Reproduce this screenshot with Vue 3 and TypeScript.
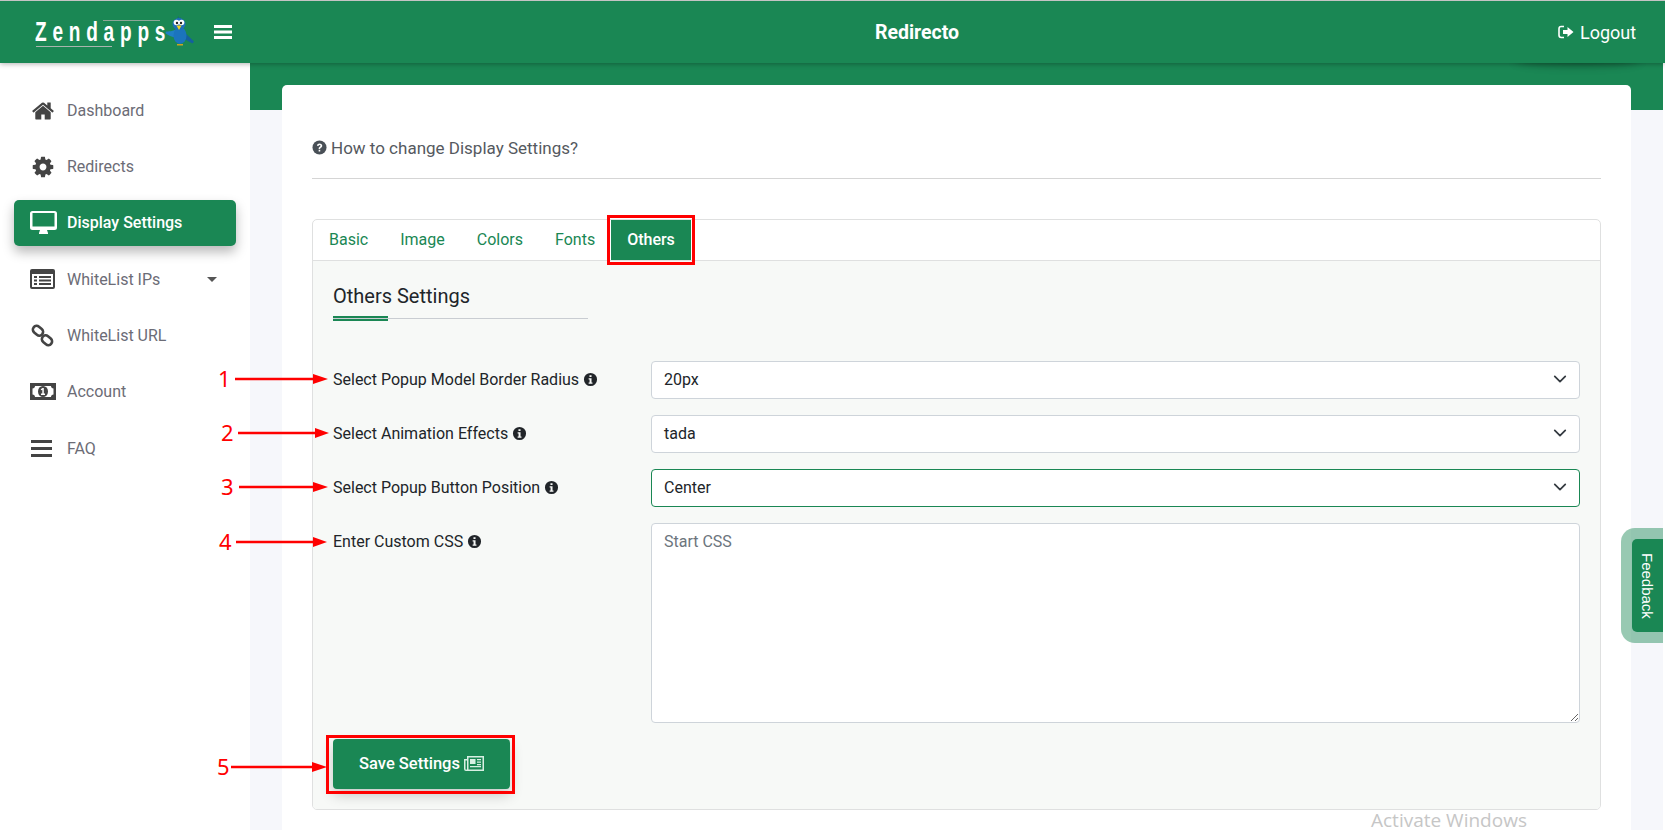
<script setup lang="ts">
interface NavItem { label: string; icon: string; active?: boolean; caret?: boolean }
const nav: NavItem[] = [
  { label: 'Dashboard', icon: 'home' },
  { label: 'Redirects', icon: 'cog' },
  { label: 'Display Settings', icon: 'desktop', active: true },
  { label: 'WhiteList IPs', icon: 'list', caret: true },
  { label: 'WhiteList URL', icon: 'link' },
  { label: 'Account', icon: 'money' },
  { label: 'FAQ', icon: 'bars' },
]
const tabs = ['Basic', 'Image', 'Colors', 'Fonts', 'Others']
const rows = [
  { label: 'Select Popup Model Border Radius', value: '20px', focus: false },
  { label: 'Select Animation Effects', value: 'tada', focus: false },
  { label: 'Select Popup Button Position', value: 'Center', focus: true },
]
const arrows = [
  { n: '1', nx: 218, x: 235, hx: 313, ex: 328, y: 379 },
  { n: '2', nx: 221, x: 238, hx: 315, ex: 329, y: 433 },
  { n: '3', nx: 221, x: 239, hx: 313, ex: 328, y: 487 },
  { n: '4', nx: 219, x: 236, hx: 313, ex: 327, y: 542 },
  { n: '5', nx: 217, x: 231, hx: 312, ex: 327, y: 767 },
]
const infoPath = 'M8 1a7 7 0 1 0 0 14A7 7 0 0 0 8 1zM6.9 3.4h2.2v2H6.9zM6 6.7h3.1v4.6h1v1.3H6v-1.3h1V8H6z'
</script>

<template>
  <div class="page">
    <i class="logout-shade"></i>
    <header class="topbar">
      <div class="brand">
        <div class="logo"><span>Zendapps</span></div>
        <svg class="bird" viewBox="0 0 30 32" width="30" height="32">
          <path d="M13 1l1.500 3.500L16 2l-.5 4-3 1z" fill="#1b4f9c" />
          <path d="M17 15l12 11.500-1.500 2L14 21z" fill="#14609f" />
          <path d="M14 12.500C10 16 5 16.500 1.500 16.500c-1.500.5-1 2 0 2.500 2 1.500 5 2.500 8 3.500L15 19z" fill="#1f7fc4" />
          <ellipse cx="15" cy="20.500" rx="6.500" ry="8.500" fill="#1b74bd" />
          <ellipse cx="14" cy="9" rx="6.500" ry="6" fill="#1f6fb8" />
          <circle cx="11.500" cy="7.500" r="2.800" fill="#fff" />
          <circle cx="16.500" cy="7.500" r="2.800" fill="#fff" />
          <circle cx="12" cy="8" r="1.200" fill="#222" />
          <circle cx="16" cy="8" r="1.200" fill="#222" />
          <path d="M11.500 10.500h5l-2.500 4.500z" fill="#f3d21f" />
          <path d="M12 29h6v1.500h-6z" fill="#c9a520" />
        </svg>
        <svg class="burger" viewBox="0 0 18 14" width="18" height="14">
          <path d="M0 0h18v3H0zM0 5.500h18v3H0zM0 11h18v3H0z" fill="#fff" />
        </svg>
      </div>
      <div class="title">Redirecto</div>
      <div class="logout">
        <svg viewBox="0 0 16 16" width="16" height="16">
          <path d="M6 2.500H3.200C2 2.500 1 3.500 1 4.700v6.600c0 1.200 1 2.200 2.200 2.200H6" fill="none" stroke="#fff" stroke-width="1.600" />
          <path d="M5 6h4.500V3l6 5-6 5v-3H5z" fill="#fff" />
        </svg>
        <span>Logout</span>
      </div>
    </header>

    <div class="body">
      <aside class="sidebar">
        <div v-for="item in nav" :key="item.label" class="nav-item" :class="{ active: item.active }">
          <span class="nav-icon">
            <svg v-if="item.icon === 'home'" viewBox="0 0 1792 1792" width="24" height="24"><path d="M1472 992v480q0 26-19 45t-45 19h-384v-384h-256v384h-384q-26 0-45-19t-19-45v-480q0-1 .5-3t.5-3l575-474 575 474q1 2 1 6zm223-69l-62 74q-8 9-21 11h-3q-13 0-21-7l-692-577-692 577q-12 8-24 7-13-2-21-11l-62-74q-8-10-7-23.5t11-21.5l719-599q32-26 76-26t76 26l244 204v-195q0-14 9-23t23-9h192q14 0 23 9t9 23v408l219 182q10 8 11 21.5t-7 23.5z" /></svg>
            <svg v-else-if="item.icon === 'cog'" viewBox="0 0 1792 1792" width="24" height="24"><path d="M1152 896q0-106-75-181t-181-75-181 75-75 181 75 181 181 75 181-75 75-181zm512-109v222q0 12-8 23t-20 13l-185 28q-19 54-39 91 35 50 107 138 10 12 10 25t-9 23q-27 37-99 108t-94 71q-12 0-26-9l-138-108q-44 23-91 38-16 136-29 186-7 28-36 28h-222q-14 0-24.5-8.5t-11.5-21.5l-28-184q-49-16-90-37l-141 107q-10 9-25 9-14 0-25-11-126-114-165-168-7-10-7-23 0-12 8-23 15-21 51-66.5t54-70.5q-27-50-41-99l-183-27q-13-2-21-12.5t-8-23.5v-222q0-12 8-23t19-13l186-28q14-46 39-92-40-57-107-138-10-12-10-24 0-10 9-23 26-36 98.5-107.5t94.5-71.5q13 0 26 10l138 107q44-23 91-38 16-136 29-186 7-28 36-28h222q14 0 24.5 8.5t11.5 21.5l28 184q49 16 90 37l142-107q9-9 24-9 13 0 25 10 129 119 165 170 7 8 7 22 0 12-8 23-15 21-51 66.5t-54 70.5q26 50 41 98l183 28q13 2 21 12.5t8 23.5z" /></svg>
            <svg v-else-if="item.icon === 'desktop'" class="wide" viewBox="0 0 27 23" width="27" height="23"><path fill-rule="evenodd" d="M2.500 0h22A2.500 2.500 0 0 1 27 2.500v14a2.500 2.500 0 0 1-2.500 2.500H17l1 3v1H9v-1l1-3H2.500A2.500 2.500 0 0 1 0 16.500v-14A2.500 2.500 0 0 1 2.500 0zM2.500 2v13.500h22V2z" /></svg>
            <svg v-else-if="item.icon === 'list'" class="wide" viewBox="0 0 25 20" width="25" height="20"><path fill-rule="evenodd" d="M2 0h21a2 2 0 0 1 2 2v16a2 2 0 0 1-2 2H2a2 2 0 0 1-2-2V2a2 2 0 0 1 2-2zM2 5v13h21V5zM4 7h3v2H4zM9 7h12v2H9zM4 10.500h3v2H4zM9 10.500h12v2H9zM4 14h3v2H4zM9 14h12v2H9z" /></svg>
            <svg v-else-if="item.icon === 'link'" viewBox="0 0 23 23" width="23" height="23"><g fill="none" stroke="#444" stroke-width="2.600"><rect x="1.500" y="3" width="11" height="7.500" rx="3.700" transform="rotate(40 7 6.700)" /><rect x="10.500" y="12.500" width="11" height="7.500" rx="3.700" transform="rotate(40 16 16.200)" /></g></svg>
            <svg v-else-if="item.icon === 'money'" class="wide" viewBox="0 0 26 17" width="26" height="17"><path fill-rule="evenodd" d="M0 0h26v17H0zM5 3c0 1.500-1 2.500-2.500 2.500v6C4 11.500 5 12.500 5 14h16c0-1.500 1-2.500 2.500-2.500v-6C22 5.500 21 4.500 21 3z" /><ellipse cx="13" cy="8.500" rx="5" ry="5.500" /><path d="M12.500 5h1.300v5.500H15V12h-4v-1.500h1.300V6.700l-1 .6-.6-1z" fill="#fff" /></svg>
            <svg v-else viewBox="0 0 21 17" width="21" height="17"><path d="M0 0h21v3H0zM0 7h21v3H0zM0 14h21v3H0z" /></svg>
          </span>
          <span class="nav-label">{{ item.label }}</span>
          <i v-if="item.caret" class="caret"></i>
        </div>
      </aside>

      <main class="main">
        <section class="card">
          <div class="help">
            <svg viewBox="0 0 16 16" width="15" height="15"><circle cx="8" cy="8" r="7.500" fill="#495057" /><path d="M5.300 6.200C5.500 4.600 6.600 3.700 8.100 3.700c1.600 0 2.800 1 2.800 2.400 0 1.100-.6 1.700-1.400 2.200-.6.400-.8.600-.8 1.200H7.100c0-1.100.3-1.700 1.100-2.200.6-.4.900-.6.900-1.100 0-.5-.4-.8-1-.8-.7 0-1.100.4-1.200 1zM7.100 10.300h1.700v1.900H7.100z" fill="#fff" /></svg>
            <span>How to change Display Settings?</span>
          </div>

          <div class="tabbox">
            <nav class="tabs">
              <span v-for="t in tabs" :key="t" class="tab" :class="{ on: t === 'Others' }">{{ t }}</span>
            </nav>
            <div class="pane">
              <h4 class="pane-title">Others Settings</h4>
              <div class="rule"><i></i></div>

              <div v-for="r in rows" :key="r.label" class="row">
                <label class="lab">
                  {{ r.label }}
                  <svg viewBox="0 0 16 16" width="15" height="15"><path fill-rule="evenodd" :d="infoPath" fill="#212529" /></svg>
                </label>
                <div class="select" :class="{ focus: r.focus }">
                  <span>{{ r.value }}</span>
                  <svg viewBox="0 0 16 16" width="14" height="14"><path d="M2 5l6 6 6-6" fill="none" stroke="#343a40" stroke-width="2" stroke-linecap="round" stroke-linejoin="round" /></svg>
                </div>
              </div>

              <div class="row">
                <label class="lab">
                  Enter Custom CSS
                  <svg viewBox="0 0 16 16" width="15" height="15"><path fill-rule="evenodd" :d="infoPath" fill="#212529" /></svg>
                </label>
                <textarea class="area" placeholder="Start CSS"></textarea>
              </div>

              <button class="save" type="button">
                Save Settings
                <svg viewBox="0 0 20 15" width="20" height="15"><path fill-rule="evenodd" d="M3 0h17v15H2a2 2 0 0 1-2-2V3h3zM1.500 4.500V13a.5.5 0 0 0 1.500 0V4.500zM4.500 1.500v12h14v-12z" fill="#d8efe3" /><path d="M6 3h5.500v5H6zM13 3h4v1.300h-4zM13 5.500h4v1.300h-4zM13 8h4v1.200h-4zM6 10h11v1.200H6z" fill="#d8efe3" /></svg>
              </button>
            </div>
          </div>
        </section>
      </main>
    </div>

    <svg class="marks" width="1665" height="830" viewBox="0 0 1665 830">
      <rect x="608.500" y="216.500" width="85" height="47" fill="none" stroke="#f00" stroke-width="3" />
      <rect x="327.500" y="736.500" width="186" height="56" fill="none" stroke="#f00" stroke-width="3" />
      <g v-for="a in arrows" :key="a.n">
        <path :d="`M${a.x} ${a.y}H${a.hx}`" stroke="#f00" stroke-width="2.500" />
        <path :d="`M${a.hx} ${a.y - 5}L${a.ex} ${a.y}L${a.hx} ${a.y + 5}z`" fill="#f00" />
        <text :x="a.nx" :y="a.y + 8" class="num">{{ a.n }}</text>
      </g>
    </svg>

    <div class="feedback"><span>Feedback</span></div>
    <div class="activate">Activate Windows</div>
  </div>
</template>

<style scoped>
.page {
  position: relative;
  width: 1665px;
  height: 830px;
  overflow: hidden;
  background: #fff;
  font-family: Roboto, "Liberation Sans", sans-serif;
  color: #212529;
  border-top: 1px solid #c4c4c4;
  box-sizing: border-box;
}
.topbar {
  position: relative;
  z-index: 2;
  display: flex;
  align-items: center;
  height: 62px;
  background: #1a8754;
  color: #fff;
  box-shadow: 0 1px 5px rgba(0, 0, 0, .3);
}
.brand {
  display: flex;
  align-items: center;
  width: 250px;
  flex: none;
  padding-left: 35px;
  box-sizing: border-box;
}
.logo {
  position: relative;
  width: 130px;
  height: 30px;
  flex: none;
}
.logo span {
  display: inline-block;
  transform: scaleX(.68);
  transform-origin: left center;
  font: 700 28px/30px "Liberation Sans", sans-serif;
  letter-spacing: 8.500px;
  white-space: nowrap;
  color: #fff;
}
.logo::before {
  content: "";
  position: absolute;
  left: 1px;
  width: 76px;
  bottom: 0;
  height: 1px;
  background: #a9b5ae;
}
.logo::after {
  content: "";
  position: absolute;
  left: 68px;
  width: 57px;
  top: 3px;
  height: 1px;
  background: #8da698;
}
.bird { margin-top: -2px; flex: none; }
.burger { margin-left: 19px; flex: none; }
.title {
  flex: 1;
  padding-left: 26px;
  text-align: center;
  font-size: 19.500px;
  font-weight: 700;
}
.logout {
  display: flex;
  align-items: center;
  gap: 6px;
  width: 107px;
  flex: none;
  font-size: 18px;
}
.logout-shade {
  position: absolute;
  z-index: 1;
  left: 1515px;
  width: 125px;
  top: 50px;
  height: 12px;
  box-shadow: 0 3px 9px rgba(0, 0, 0, .3);
  border-radius: 50%;
}
.body {
  display: flex;
  height: 767px;
}
.sidebar {
  width: 250px;
  flex: none;
  box-sizing: border-box;
  padding: 24px 14px 0;
  background: #fff;
}
.nav-item {
  display: flex;
  align-items: center;
  box-sizing: border-box;
  height: 46px;
  margin-bottom: 10.300px;
  padding: 1px 19px 0 17px;
  border-radius: 5px;
  font-size: 16px;
  color: #6c6c76;
}
.nav-item svg { fill: #444; display: block; }
.nav-item svg.wide { margin-left: -1px; }
.nav-icon {
  width: 36px;
  flex: none;
  display: flex;
  align-items: center;
}
.nav-label { flex: 1; }
.nav-item.active {
  padding-top: 0;
  background: #1a8754;
  color: #fff;
  font-weight: 500;
  box-shadow: 0 6px 12px rgba(0, 0, 0, .28);
}
.nav-item.active svg { fill: #fff; }
.caret {
  width: 0;
  height: 0;
  border-left: 5px solid transparent;
  border-right: 5px solid transparent;
  border-top: 5px solid #555;
}
.main {
  flex: 1;
  min-width: 0;
  margin-right: 2px;
  padding: 22px 32px 0;
  background: linear-gradient(#1a8754 47px, #f6f7fb 47px);
}
.card {
  height: 745px;
  box-sizing: border-box;
  padding: 0 30px;
  background: #fff;
  border-radius: 5px 5px 0 0;
}
.help {
  display: flex;
  align-items: center;
  gap: 4px;
  height: 94px;
  padding-top: 32px;
  box-sizing: border-box;
  border-bottom: 1px solid #d5d5d5;
  font-size: 17px;
  color: #555960;
}
.tabbox {
  margin-top: 40px;
  height: 591px;
  box-sizing: border-box;
  border: 1px solid #dfe0e0;
  border-radius: 5px;
  overflow: hidden;
}
.tabs {
  display: flex;
  height: 41px;
  box-sizing: border-box;
  border-bottom: 1px solid #dfe0e0;
  font-size: 16px;
}
.tab {
  display: flex;
  align-items: center;
  box-sizing: border-box;
  padding: 0 16px 2px;
  color: #1a8754;
}
.tab.on {
  background: #1a8754;
  color: #fff;
  font-weight: 500;
}
.pane {
  height: 549px;
  box-sizing: border-box;
  padding: 23px 20px 0;
  background: #f7f9f7;
}
.pane-title {
  margin: 0;
  font-size: 20px;
  font-weight: 400;
  line-height: 24px;
}
.rule {
  position: relative;
  width: 255px;
  height: 1px;
  margin: 10px 0 42px;
  background: #c9cdd2;
}
.rule i {
  position: absolute;
  left: 0;
  top: -2px;
  width: 55px;
  height: 1px;
  border-top: 2px solid #1a8754;
  border-bottom: 2px solid #1a8754;
}
.row {
  display: flex;
  margin-bottom: 16px;
}
.lab {
  display: flex;
  align-items: center;
  gap: 4px;
  box-sizing: border-box;
  width: 318px;
  height: 38px;
  padding-bottom: 2px;
  flex: none;
  font-size: 16px;
  white-space: nowrap;
}
.select {
  flex: 1;
  display: flex;
  align-items: center;
  justify-content: space-between;
  height: 38px;
  box-sizing: border-box;
  padding: 0 12px 2px;
  background: #fff;
  border: 1px solid #ced4da;
  border-radius: 4px;
  font-size: 16px;
}
.select.focus { border-color: #1a8754; }
.area {
  flex: 1;
  height: 200px;
  box-sizing: border-box;
  margin: 0;
  padding: 8px 12px;
  background: #fff;
  border: 1px solid #ced4da;
  border-radius: 4px;
  font: 16px/20px Roboto, sans-serif;
  outline: none;
}
.area::placeholder { color: #6c757d; }
.save {
  display: flex;
  align-items: center;
  justify-content: center;
  gap: 4px;
  box-sizing: border-box;
  width: 177px;
  height: 50px;
  padding: 0 0 2px;
  border: 0;
  border-radius: 4px;
  background: #1a8754;
  color: #fff;
  font: 500 16.500px Roboto, sans-serif;
  box-shadow: 0 6px 14px rgba(0, 0, 0, .2);
}
.marks {
  position: absolute;
  z-index: 3;
  left: 0;
  top: -1px;
  pointer-events: none;
}
.num {
  fill: #f00;
  font: 22px "Noto Sans", sans-serif;
}
.feedback {
  position: absolute;
  z-index: 3;
  right: 2px;
  top: 527px;
  width: 42px;
  height: 115px;
  box-sizing: border-box;
  padding: 11px 0 11px 11px;
  background: rgba(26, 135, 84, .45);
  border-radius: 14px 0 0 14px;
}
.feedback span {
  display: flex;
  align-items: center;
  justify-content: center;
  width: 100%;
  height: 100%;
  background: #1a8754;
  border-radius: 5px 0 0 5px;
  color: #fff;
  writing-mode: vertical-rl;
  font: 15px "Liberation Sans", sans-serif;
}
.activate {
  position: absolute;
  z-index: 3;
  left: 1371px;
  top: 809px;
  font: 19px/20px "Open Sans", sans-serif;
  color: #c6c6c6;
}
</style>

<style>
html, body { margin: 0; padding: 0; background: #fff; overflow: hidden; }
</style>
